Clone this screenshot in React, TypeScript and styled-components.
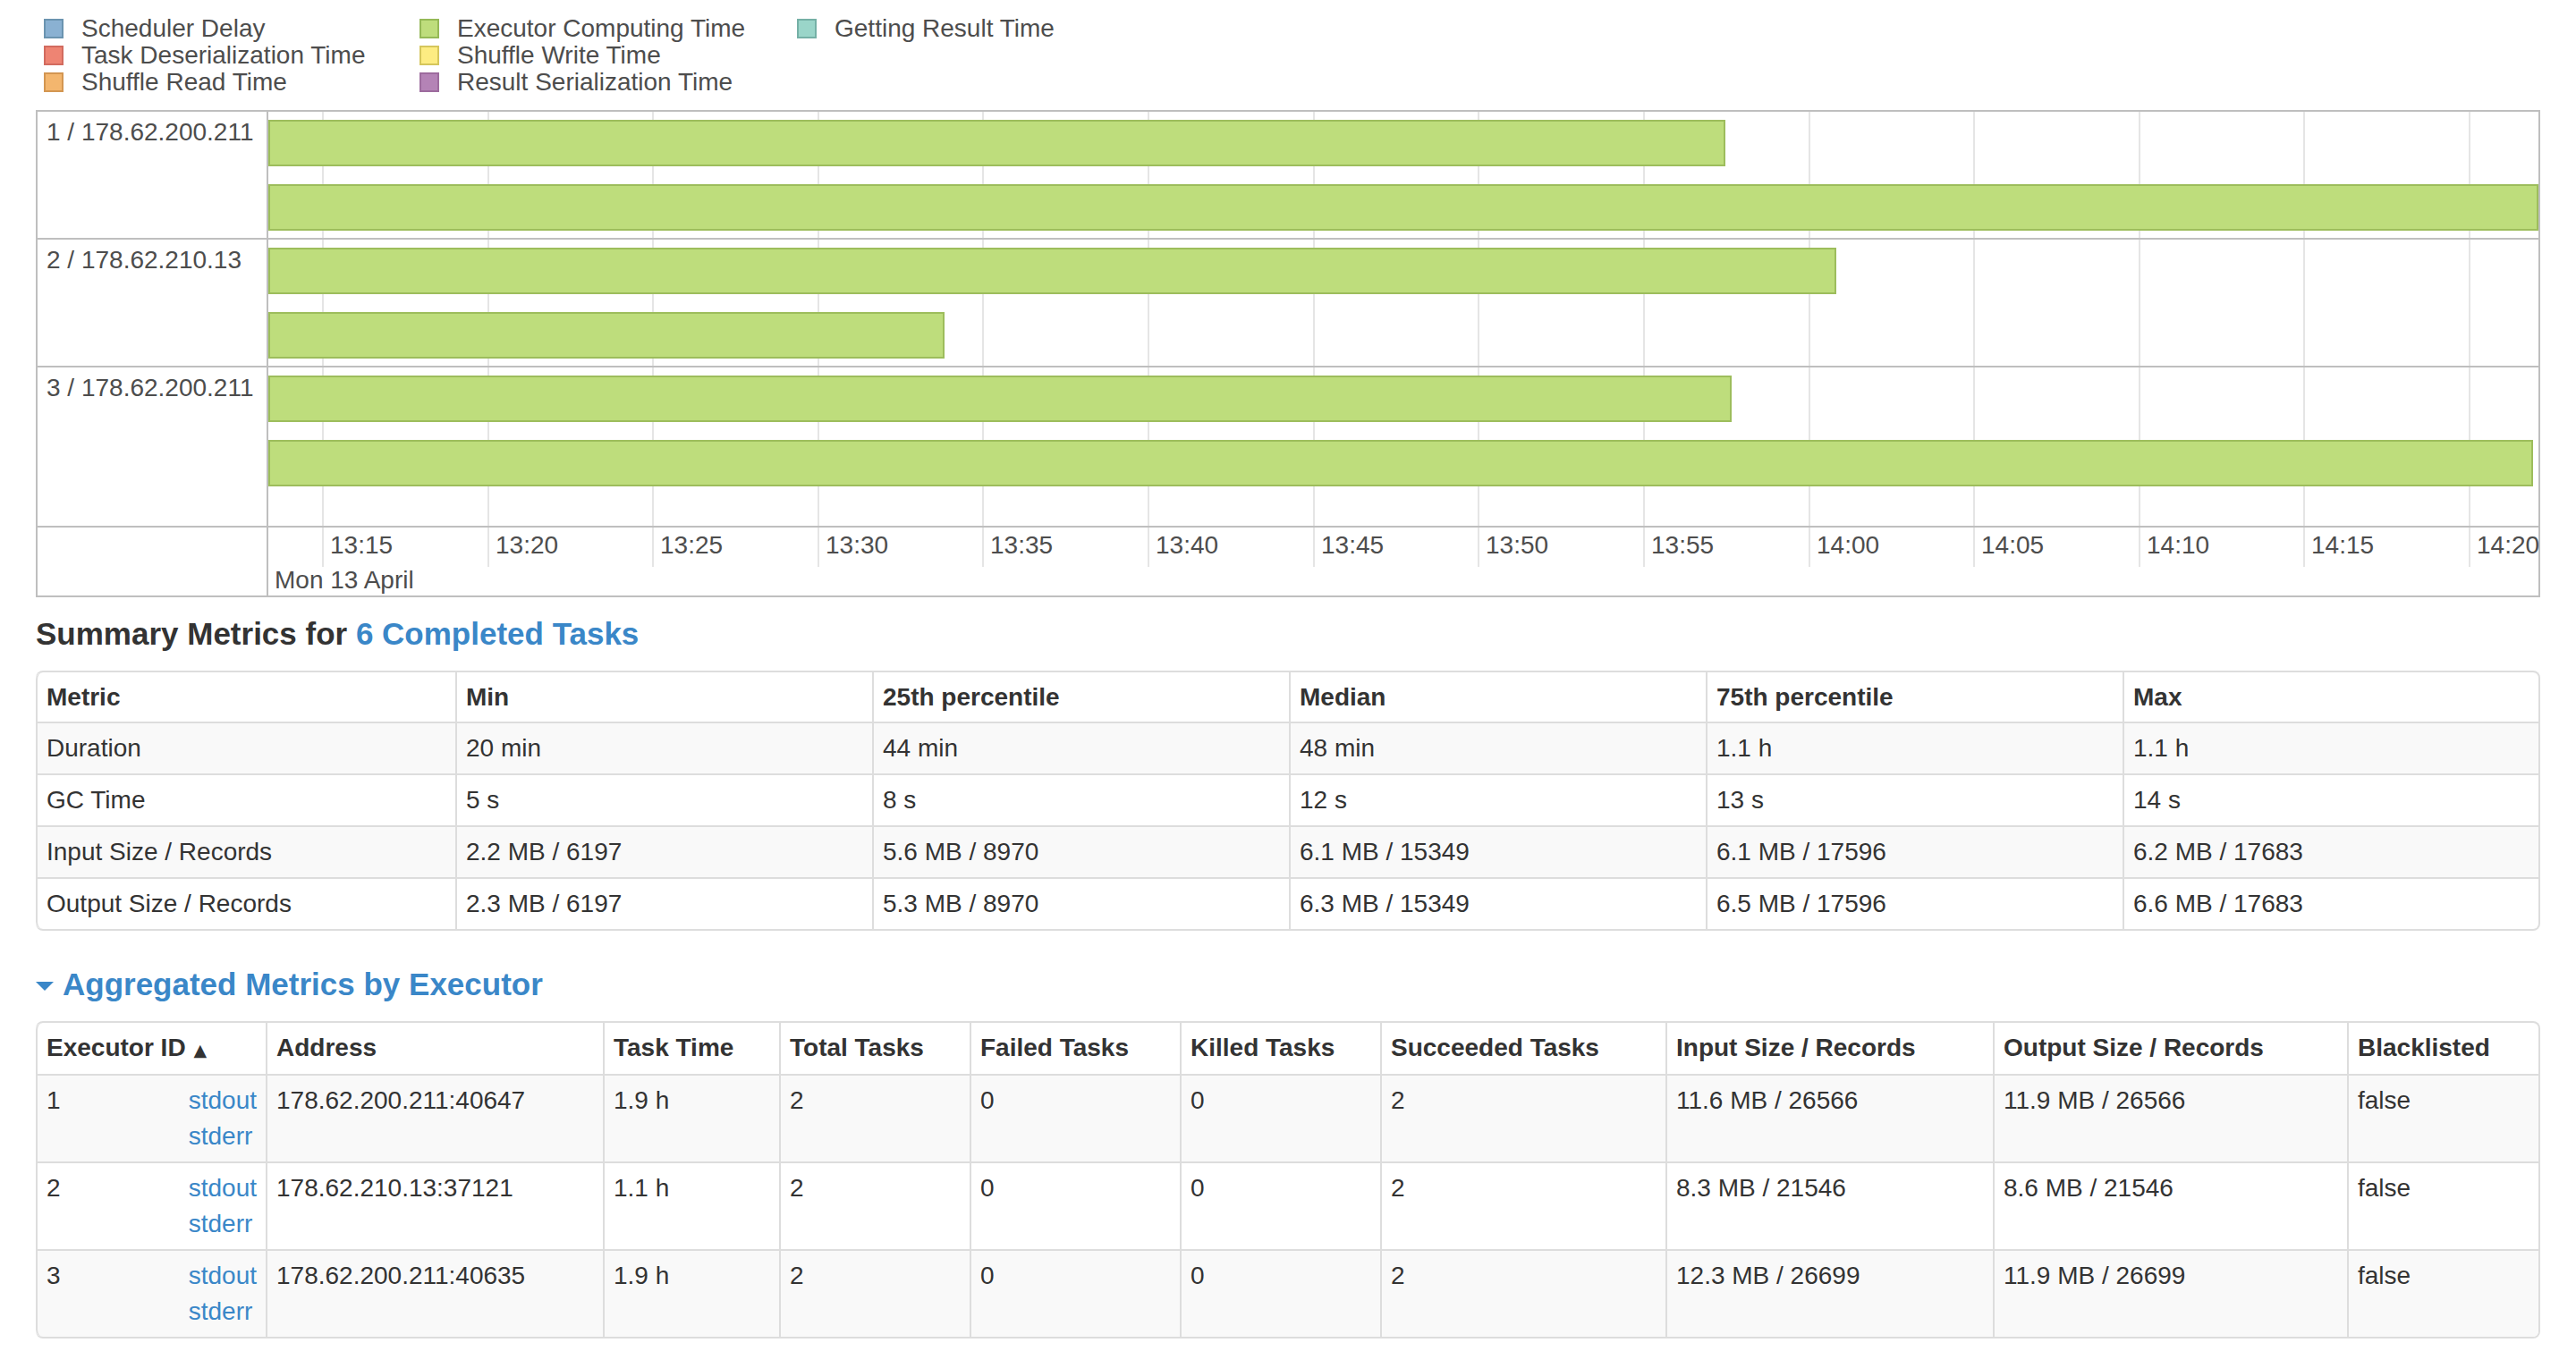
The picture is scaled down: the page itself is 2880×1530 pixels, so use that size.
import React from "react";
import styled, { createGlobalStyle } from "styled-components";

const GlobalStyle = createGlobalStyle`
  html, body { margin: 0; padding: 0; background: #fff; }
  body {
    font-family: "Liberation Sans", Arial, Helvetica, sans-serif;
    font-size: 28px;
    line-height: 40px;
    color: #333;
  }
  * { box-sizing: border-box; }
`;

const LINK = "#3a87c8";

const Page = styled.div`
  width: 2880px;
  padding: 17px 40px 0;
`;

/* ---------- Legend ---------- */
const Legend = styled.div`
  display: grid;
  grid-template-columns: 420px 422px auto;
  grid-template-rows: repeat(3, 30px);
  grid-auto-flow: column;
  margin: 0 0 16px 9px;
  color: #4d4d4d;
  font-size: 28px;
  line-height: 30px;
`;

const LegendItem = styled.div`
  display: flex;
  align-items: center;
  gap: 20px;
  white-space: nowrap;
`;

const Swatch = styled.span<{ $fill: string; $stroke: string }>`
  flex: none;
  width: 22px;
  height: 22px;
  background: ${(p) => p.$fill};
  border: 2px solid ${(p) => p.$stroke};
`;

/* ---------- Timeline ---------- */
const Timeline = styled.div`
  height: 545px;
  border: 2px solid #bfbfbf;
  display: flex;
  flex-direction: column;
  color: #4d4d4d;
  margin-bottom: 21px;
`;

const GroupRow = styled.div<{ $last?: boolean }>`
  display: flex;
  ${(p) => (p.$last ? "flex: 1;" : "flex: none; border-bottom: 2px solid #bfbfbf;")}
`;

const GroupLabel = styled.div`
  flex: none;
  width: 258px;
  border-right: 2px solid #bfbfbf;
  padding: 3px 10px 0;
  line-height: 40px;
  white-space: nowrap;
`;

const Lane = styled.div`
  flex: 1;
  position: relative;
  display: flex;
  flex-direction: column;
  gap: 20px;
  padding: 9px 0 8px;
`;

const GridLine = styled.div<{ $axis?: boolean }>`
  position: absolute;
  top: 0;
  width: 2px;
  background: #e5e5e5;
  ${(p) => (p.$axis ? "height: 44px;" : "bottom: 0;")}
`;

const Bar = styled.div`
  position: relative;
  z-index: 1;
  height: 52px;
  background: #bedd7c;
  border: 2px solid #9dbd5c;
`;

const AxisRow = styled.div`
  flex: none;
  display: flex;
  height: 78px;
  border-top: 2px solid #bfbfbf;
`;

const AxisSpacer = styled.div`
  flex: none;
  width: 258px;
  border-right: 2px solid #bfbfbf;
`;

const AxisPanel = styled.div`
  flex: 1;
  position: relative;
  padding: 40px 0 0 7px;
`;

const MinorLabel = styled.div`
  position: absolute;
  top: 0;
  line-height: 40px;
  white-space: nowrap;
`;

const MajorLabel = styled.div`
  line-height: 38px;
  white-space: nowrap;
`;

/* ---------- Headings ---------- */
const SectionTitle = styled.h4`
  margin: 0 0 21px;
  font-size: 35px;
  line-height: 40px;
  font-weight: bold;
  color: #333;
`;

const TitleLink = styled.a`
  color: ${LINK};
  text-decoration: none;
  cursor: pointer;
`;

const Arrow = styled.span`
  display: inline-block;
  width: 0;
  height: 0;
  border-left: 10px solid transparent;
  border-right: 10px solid transparent;
  border-top: 10px solid ${LINK};
  margin: 0 10px 5px 0;
`;

/* ---------- Tables ---------- */
const DataTable = styled.table`
  width: 100%;
  table-layout: fixed;
  border-collapse: separate;
  border-spacing: 0;
  border: 2px solid #ddd;
  border-left: 0;
  border-radius: 8px;
  margin-bottom: 40px;

  thead th:first-child { border-top-left-radius: 8px; }
  thead th:last-child { border-top-right-radius: 6px; }
  tbody tr:last-child td:first-child { border-bottom-left-radius: 8px; }
  tbody tr:last-child td:last-child { border-bottom-right-radius: 6px; }
  tbody tr:nth-child(odd) td { background: #f9f9f9; }
`;

const Th = styled.th<{ $w: number }>`
  width: ${(p) => p.$w}px;
  text-align: left;
  font-weight: bold;
  padding: 8px 10px 7px;
  line-height: 40px;
  border-left: 2px solid #ddd;
  vertical-align: top;
  white-space: nowrap;
  color: #333;
`;

const Td = styled.td`
  padding: 8px 10px;
  line-height: 40px;
  border-left: 2px solid #ddd;
  border-top: 2px solid #ddd;
  vertical-align: top;
  white-space: nowrap;
  color: #333;
`;

const SortArrow = styled.span`
  font-family: "DejaVu Sans", sans-serif;
  font-size: 19px;
  margin-left: 9px;
`;

const LogLinks = styled.div`
  float: right;
`;

const LogLink = styled.a`
  display: block;
  color: ${LINK};
  text-decoration: none;
`;

/* ---------- Data ---------- */
const legend = [
  { label: "Scheduler Delay", fill: "#8ab1d2", stroke: "#6b94b0" },
  { label: "Task Deserialization Time", fill: "#ee8473", stroke: "#d26b5f" },
  { label: "Shuffle Read Time", fill: "#f3b66e", stroke: "#d39651" },
  { label: "Executor Computing Time", fill: "#bedd7c", stroke: "#95b957" },
  { label: "Shuffle Write Time", fill: "#fdec82", stroke: "#d5c65c" },
  { label: "Result Serialization Time", fill: "#b483b6", stroke: "#9d6b9e" },
  { label: "Getting Result Time", fill: "#9ad5c9", stroke: "#75b0a6" },
];

const groups = [
  { label: "1 / 178.62.200.211", bars: [1629, 2538] },
  { label: "2 / 178.62.210.13", bars: [1753, 756] },
  { label: "3 / 178.62.200.211", bars: [1636, 2532] },
];

const ticks = [
  "13:15", "13:20", "13:25", "13:30", "13:35", "13:40", "13:45",
  "13:50", "13:55", "14:00", "14:05", "14:10", "14:15", "14:20",
];
const tickX = (i: number) => Math.round(60 + i * 184.615);

const summaryHead = ["Metric", "Min", "25th percentile", "Median", "75th percentile", "Max"];
const summaryWidths = [469, 466, 466, 466, 466, 465];
const summaryRows = [
  ["Duration", "20 min", "44 min", "48 min", "1.1 h", "1.1 h"],
  ["GC Time", "5 s", "8 s", "12 s", "13 s", "14 s"],
  ["Input Size / Records", "2.2 MB / 6197", "5.6 MB / 8970", "6.1 MB / 15349", "6.1 MB / 17596", "6.2 MB / 17683"],
  ["Output Size / Records", "2.3 MB / 6197", "5.3 MB / 8970", "6.3 MB / 15349", "6.5 MB / 17596", "6.6 MB / 17683"],
];

const aggHead = [
  "Executor ID", "Address", "Task Time", "Total Tasks", "Failed Tasks", "Killed Tasks",
  "Succeeded Tasks", "Input Size / Records", "Output Size / Records", "Blacklisted",
];
const aggWidths = [257, 377, 197, 213, 235, 224, 319, 366, 396, 214];
const aggRows = [
  ["1", "178.62.200.211:40647", "1.9 h", "2", "0", "0", "2", "11.6 MB / 26566", "11.9 MB / 26566", "false"],
  ["2", "178.62.210.13:37121", "1.1 h", "2", "0", "0", "2", "8.3 MB / 21546", "8.6 MB / 21546", "false"],
  ["3", "178.62.200.211:40635", "1.9 h", "2", "0", "0", "2", "12.3 MB / 26699", "11.9 MB / 26699", "false"],
];

const GridLines: React.FC<{ axis?: boolean }> = ({ axis }) => (
  <>
    {ticks.map((t, i) => (
      <GridLine key={t} $axis={axis} style={{ left: tickX(i) }} />
    ))}
  </>
);

export default function App() {
  return (
    <>
      <GlobalStyle />
      <Page>
        <Legend>
          {legend.map((l) => (
            <LegendItem key={l.label}>
              <Swatch $fill={l.fill} $stroke={l.stroke} />
              {l.label}
            </LegendItem>
          ))}
        </Legend>

        <Timeline>
          {groups.map((g, gi) => (
            <GroupRow key={g.label} $last={gi === groups.length - 1}>
              <GroupLabel>{g.label}</GroupLabel>
              <Lane>
                <GridLines />
                {g.bars.map((w, bi) => (
                  <Bar key={bi} style={{ width: w }} />
                ))}
              </Lane>
            </GroupRow>
          ))}
          <AxisRow>
            <AxisSpacer />
            <AxisPanel>
              <GridLines axis />
              {ticks.map((t, i) => (
                <MinorLabel key={t} style={{ left: tickX(i) + 9 }}>
                  {t}
                </MinorLabel>
              ))}
              <MajorLabel>Mon 13 April</MajorLabel>
            </AxisPanel>
          </AxisRow>
        </Timeline>

        <SectionTitle>
          Summary Metrics for <TitleLink>6 Completed Tasks</TitleLink>
        </SectionTitle>
        <DataTable>
          <thead>
            <tr>
              {summaryHead.map((h, i) => (
                <Th key={h} $w={summaryWidths[i]}>{h}</Th>
              ))}
            </tr>
          </thead>
          <tbody>
            {summaryRows.map((r) => (
              <tr key={r[0]}>
                {r.map((c, i) => (
                  <Td key={i}>{c}</Td>
                ))}
              </tr>
            ))}
          </tbody>
        </DataTable>

        <SectionTitle>
          <TitleLink>
            <Arrow />
            Aggregated Metrics by Executor
          </TitleLink>
        </SectionTitle>
        <DataTable>
          <thead>
            <tr>
              {aggHead.map((h, i) => (
                <Th key={h} $w={aggWidths[i]}>
                  {h}
                  {i === 0 && <SortArrow>▲</SortArrow>}
                </Th>
              ))}
            </tr>
          </thead>
          <tbody>
            {aggRows.map((r) => (
              <tr key={r[0]}>
                {r.map((c, i) => (
                  <Td key={i}>
                    {c}
                    {i === 0 && (
                      <LogLinks>
                        <LogLink>stdout</LogLink>
                        <LogLink>stderr</LogLink>
                      </LogLinks>
                    )}
                  </Td>
                ))}
              </tr>
            ))}
          </tbody>
        </DataTable>
      </Page>
    </>
  );
}
